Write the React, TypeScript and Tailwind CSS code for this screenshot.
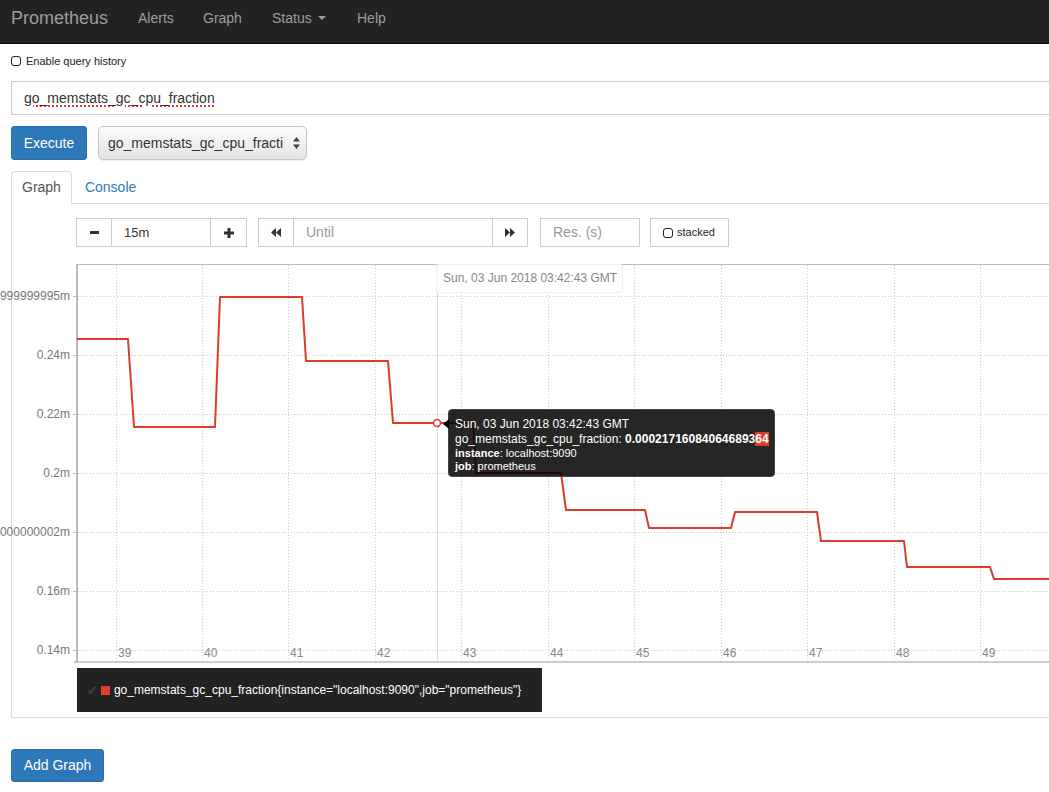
import React from "react";

const yTicks = [
  { y: 295, label: "0.25999999995m" },
  { y: 354, label: "0.24m" },
  { y: 413, label: "0.22m" },
  { y: 472, label: "0.2m" },
  { y: 531, label: "0.18000000002m" },
  { y: 590, label: "0.16m" },
  { y: 649, label: "0.14m" },
];

const xTicks = [
  { x: 116, label: "39" },
  { x: 202, label: "40" },
  { x: 288, label: "41" },
  { x: 375, label: "42" },
  { x: 461, label: "43" },
  { x: 548, label: "44" },
  { x: 634, label: "45" },
  { x: 721, label: "46" },
  { x: 807, label: "47" },
  { x: 894, label: "48" },
  { x: 980, label: "49" },
];

const series =
  "M77,338 H128 L134,426 H215 L220,296 H302 L306,360 H388 L393,422 H473 L476,472 H561 L566,509 H645 L649,527 H731 L735,511 H817 L821,540 H904 L907,566 H990 L994,578 H1060";

function Caret() {
  return <span className="ml-[6px] inline-block w-0 h-0 border-t-[4px] border-x-[4px] border-x-transparent border-t-[#9d9d9d]" />;
}

function DoubleArrow({ dir }: { dir: "left" | "right" }) {
  return (
    <svg width="10" height="9" viewBox="0 0 10 9">
      {dir === "left" ? (
        <path d="M5 0 L0 4.5 L5 9 Z M10 0 L5 4.5 L10 9 Z" fill="#333" />
      ) : (
        <path d="M0 0 L5 4.5 L0 9 Z M5 0 L10 4.5 L5 9 Z" fill="#333" />
      )}
    </svg>
  );
}

function Chart() {
  return (
    <div className="relative h-[407px] mt-[9px]">
      <svg width={1000} height={407} className="block" style={{ overflow: "visible" }}>
        <g transform="translate(-76 -255)" fontFamily="'Liberation Sans', Arial, sans-serif" fontSize="12">
          {yTicks.map((t) => (
            <g key={t.y}>
              <line x1={78} x2={1060} y1={t.y + 0.5} y2={t.y + 0.5} stroke="#c8c8c8" strokeDasharray="1 2" />
              <line x1={73} x2={77} y1={t.y + 0.5} y2={t.y + 0.5} stroke="#bbb" />
              <text x={70} y={t.y + 4} textAnchor="end" fill="#777">{t.label}</text>
            </g>
          ))}
          {xTicks.map((t) => (
            <g key={t.x}>
              <line x1={t.x + 0.5} x2={t.x + 0.5} y1={264} y2={661} stroke="#c8c8c8" strokeDasharray="1 2" />
              <text x={t.x + 2} y={656} fill="#888">{t.label}</text>
            </g>
          ))}
          <line x1={437.5} x2={437.5} y1={263} y2={661} stroke="#ddd" />
          <line x1={77} x2={1060} y1={263.5} y2={263.5} stroke="#bbb" />
          <line x1={74} x2={1060} y1={661} y2={661} stroke="#bbb" strokeWidth={1.5} />
          <line x1={77} x2={77} y1={263} y2={662} stroke="#bbb" strokeWidth={2} />
          <path d={series} fill="none" stroke="#dc3c29" strokeWidth={2} strokeLinejoin="round" />
          <circle cx={437} cy={422} r={3.5} fill="#fff" stroke="#dc3c29" strokeWidth={1.5} />
        </g>
      </svg>

      <div className="absolute left-[360px] top-[8px] w-[187px] h-[29px] bg-white/90 border border-[#eee] rounded-[3px] text-[12px] text-[#888] leading-[27px] pl-[6px]">
        Sun, 03 Jun 2018 03:42:43 GMT
      </div>

      <div className="absolute left-[372px] top-[153px] w-[327px] h-[68px] bg-black/85 border border-[#444] rounded-[4px] pl-[6px] pt-[7px] text-white whitespace-nowrap">
        <span className="absolute -left-[6px] top-[9px] w-0 h-0 border-y-[5px] border-y-transparent border-r-[6px] border-r-black" />
        <div className="text-[12px] leading-[15px]">Sun, 03 Jun 2018 03:42:43 GMT</div>
        <div className="text-[12px] leading-[15px]">
          go_memstats_gc_cpu_fraction: <b>0.000217160840646893<span className="bg-[#d9402b]">64</span></b>
        </div>
        <div className="text-[11px] leading-[13px]">
          <b>instance</b>: localhost:9090
        </div>
        <div className="text-[11px] leading-[13px]">
          <b>job</b>: prometheus
        </div>
      </div>
    </div>
  );
}

export default function App() {
  return (
    <div className="w-[1049px] h-[792px] overflow-hidden bg-white text-[#333] font-['Liberation_Sans',Arial,sans-serif]">
      <nav className="h-[44px] bg-[#222] border-b border-[#080808] flex items-start pt-[8px] text-[#9d9d9d] leading-[20px]">
        <div className="w-[138px] pl-[11px] text-[18px]">Prometheus</div>
        <div className="w-[65px] text-[14px]">Alerts</div>
        <div className="w-[69px] text-[14px]">Graph</div>
        <div className="w-[85px] text-[14px] flex items-center">
          Status
          <Caret />
        </div>
        <div className="text-[14px]">Help</div>
      </nav>

      <div className="w-[1100px] pl-[11px]">
        <div className="mt-[10px] h-[14px] flex items-center gap-[5px] text-[11px] text-[#222]">
          <span className="w-[10px] h-[10px] border-[1.5px] border-[#222] rounded-[3px]" />
          <span>Enable query history</span>
        </div>

        <div className="mt-[13px] h-[34px] border border-[#ccc] flex items-center pl-[12px] text-[14px] text-[#333]">
          <span className="underline decoration-dotted decoration-[#e33] decoration-2 underline-offset-[3px]">
            go_memstats_gc_cpu_fraction
          </span>
        </div>

        <div className="mt-[11px] flex items-center">
          <button className="w-[76px] h-[34px] bg-[#2c78b8] border border-[#2e6da4] rounded-[3px] text-white text-[14px]">
            Execute
          </button>
          <div className="ml-[11px] w-[209px] h-[34px] rounded-[5px] border border-[#c4c4c4] bg-gradient-to-b from-[#fcfcfc] to-[#e4e4e4] shadow-[0_1px_1px_rgba(0,0,0,0.08)] flex items-center justify-between pl-[9px] pr-[6px] text-[14px] text-[#333]">
            <span>go_memstats_gc_cpu_fracti</span>
            <svg width="7" height="12" viewBox="0 0 7 12">
              <path d="M3.5 0 L7 4.5 H0 Z M0 7.5 H7 L3.5 12 Z" fill="#444" />
            </svg>
          </div>
        </div>

        <div className="mt-[11px] flex border-b border-[#ddd] text-[14px]">
          <div className="h-[33px] -mb-px border border-[#ddd] border-b-white bg-white rounded-t-[4px] px-[10px] leading-[31px] text-[#555]">
            Graph
          </div>
          <div className="ml-[2px] px-[11px] leading-[32px] text-[#337ab7]">Console</div>
        </div>

        <div className="border-l border-b border-[#ddd] pl-[64px] pt-[14px] pb-[5px]">
          <div className="flex h-[29px] text-[14px]">
            <div className="flex">
              <div className="w-[36px] h-full border border-[#ccc] flex items-center justify-center">
                <svg width="9" height="3" viewBox="0 0 9 3"><rect width="9" height="3" fill="#333" /></svg>
              </div>
              <div className="w-[99px] h-full border-y border-r border-[#ccc] flex items-center pl-[12px] text-[13px] text-[#333]">15m</div>
              <div className="w-[36px] h-full border-y border-r border-[#ccc] flex items-center justify-center">
                <svg width="10" height="10" viewBox="0 0 10 10"><path d="M3.5 0 H6.5 V3.5 H10 V6.5 H6.5 V10 H3.5 V6.5 H0 V3.5 H3.5 Z" fill="#333" /></svg>
              </div>
            </div>
            <div className="flex ml-[11px]">
              <div className="w-[36px] h-full border border-[#ccc] flex items-center justify-center">
                <DoubleArrow dir="left" />
              </div>
              <div className="w-[199px] h-full border-y border-r border-[#ccc] flex items-center pl-[12px] text-[#999]">Until</div>
              <div className="w-[35px] h-full border-y border-r border-[#ccc] flex items-center justify-center">
                <DoubleArrow dir="right" />
              </div>
            </div>
            <div className="ml-[12px] w-[100px] h-full border border-[#ccc] flex items-center pl-[12px] text-[#999]">Res. (s)</div>
            <div className="ml-[10px] w-[79px] h-full border border-[#ccc] flex items-center pl-[12px] gap-[4px] text-[11px] text-[#222]">
              <span className="w-[10px] h-[10px] border-[1.5px] border-[#222] rounded-[3px]" />
              <span>stacked</span>
            </div>
          </div>

          <Chart />

          <div className="ml-[1px] mt-[5px] w-[465px] h-[44px] bg-[#222] flex items-center pl-[10px] text-[12px] text-white whitespace-nowrap">
            <span className="text-[#2f4257] text-[13px] leading-none font-['DejaVu_Sans',sans-serif]">✔</span>
            <span className="ml-[3px] w-[9px] h-[9px] bg-[#e0412d]" />
            <span className="ml-[4px]">go_memstats_gc_cpu_fraction{"{"}instance="localhost:9090",job="prometheus"{"}"}</span>
          </div>
        </div>

        <button className="mt-[31px] w-[93px] h-[33px] bg-[#2c78b8] border border-[#2e6da4] rounded-[3px] text-white text-[14px]">
          Add Graph
        </button>
      </div>
    </div>
  );
}
